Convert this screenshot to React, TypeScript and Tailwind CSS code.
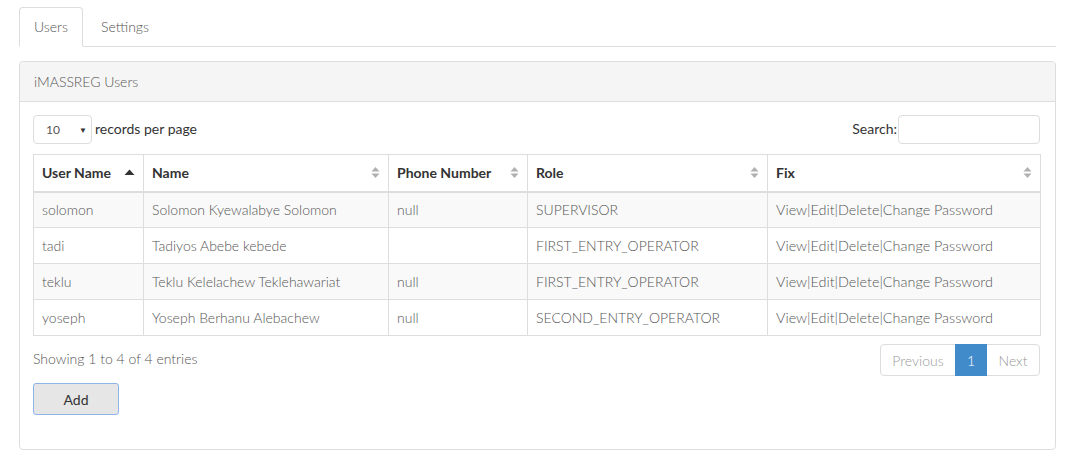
import React from "react";

const rows = [
  ["solomon", "Solomon Kyewalabye Solomon", "null", "SUPERVISOR"],
  ["tadi", "Tadiyos Abebe kebede", "", "FIRST_ENTRY_OPERATOR"],
  ["teklu", "Teklu Kelelachew Teklehawariat", "null", "FIRST_ENTRY_OPERATOR"],
  ["yoseph", "Yoseph Berhanu Alebachew", "null", "SECOND_ENTRY_OPERATOR"],
];

function SortBoth() {
  return (
    <svg width="9" height="13" viewBox="0 0 9 13" className="shrink-0">
      <path d="M0.5 5.5 L4.5 1 L8.5 5.5 Z" fill="#b0b0b0" />
      <path d="M0.5 7.5 L4.5 12 L8.5 7.5 Z" fill="#b0b0b0" />
    </svg>
  );
}

function SortUp() {
  return (
    <svg width="11" height="7" viewBox="0 0 11 7" className="shrink-0">
      <path d="M0.5 6 L5.5 0.5 L10.5 6 Z" fill="#333" />
    </svg>
  );
}

const cols = [
  { label: "User Name", w: "w-[110px]", sort: "up" },
  { label: "Name", w: "w-[245px]", sort: "both" },
  { label: "Phone Number", w: "w-[139px]", sort: "both" },
  { label: "Role", w: "w-[240px]", sort: "both" },
  { label: "Fix", w: "w-[273px]", sort: "both" },
];

export default function App() {
  return (
    <div className="w-[1079px] h-[462px] bg-white text-[14px] text-[#333] font-['Lato','Liberation_Sans',sans-serif] pl-[19px] pr-[23px] pt-[7px]">
      {/* Tabs */}
      <div className="flex border-b border-[#ddd] h-[40px]">
        <div className="w-[64px] h-[40px] border border-[#ddd] border-b-white rounded-t-[4px] flex items-center justify-center pb-[1px] font-light text-[#555] bg-white -mb-px">
          Users
        </div>
        <div className="pl-[18px] pr-[16px] h-[39px] flex items-center pb-[1px] font-light text-[#555]">Settings</div>
      </div>

      {/* Panel */}
      <div className="mt-[14px] border border-[#ddd] rounded-[4px] h-[389px]">
        <div className="h-[40px] bg-[#f5f5f5] border-b border-[#ddd] rounded-t-[4px] flex items-center pb-[1px] px-[14px] font-light text-[#555]">
          iMASSREG Users
        </div>
        <div className="px-[13px] pt-[13px]">
          <div className="flex items-start justify-between h-[39px] w-[1007px]">
            <div className="flex items-center">
              <div className="w-[59px] h-[29px] border border-[#ddd] rounded-[4px] flex items-center justify-between pl-[12px] pr-[4px] text-[12px] text-[#555]">
                <span>10</span>
                <span className="text-[8px] text-[#333]">▼</span>
              </div>
              <span className="ml-[3px] -mt-[2px]">records per page</span>
            </div>
            <div className="flex items-center">
              <span className="-mt-[2px]">Search:</span>
              <div className="w-[142px] h-[29px] border border-[#ddd] rounded-[4px] ml-[1px]" />
            </div>
          </div>

          <table className="w-[1007px] border-collapse table-fixed border border-[#ddd]">
            <thead>
              <tr className="h-[37px] border-b-2 border-[#ddd]">
                {cols.map((c) => (
                  <th key={c.label} className={`${c.w} border-r border-[#ddd] px-[8px] text-left font-bold text-[14px] text-[#333]`}>
                    <div className="flex items-center justify-between">
                      <span>{c.label}</span>
                      {c.sort === "up" ? <SortUp /> : <SortBoth />}
                    </div>
                  </th>
                ))}
              </tr>
            </thead>
            <tbody>
              {rows.map((r, i) => (
                <tr key={r[0]} className={`h-[36px] border-t border-[#ddd] ${i % 2 === 0 ? "bg-[#f9f9f9]" : "bg-white"}`}>
                  {r.map((v, j) => (
                    <td key={j} className="border-r border-[#ddd] px-[8px] font-light text-[#555] whitespace-nowrap">
                      {v}
                    </td>
                  ))}
                  <td className="px-[8px] font-light text-[#555] text-[14.4px] whitespace-nowrap">
                    View|Edit|Delete|Change Password
                  </td>
                </tr>
              ))}
            </tbody>
          </table>

          <div className="flex items-start justify-between mt-[8px] w-[1007px]">
            <div className="pt-[4px] font-light text-[#555]">Showing 1 to 4 of 4 entries</div>
            <div className="flex h-[32px] border border-[#ddd] rounded-[4px] font-light text-[#999]">
              <div className="w-[74px] flex items-center justify-center">Previous</div>
              <div className="w-[32px] flex items-center justify-center bg-[#428bca] text-white -my-px">1</div>
              <div className="w-[52px] flex items-center justify-center">Next</div>
            </div>
          </div>

          <button className="mt-[7px] w-[86px] h-[32px] bg-[#e6e6e6] border border-[#8fb4e8] rounded-[3px] text-[#333] text-[14px] font-normal flex items-center justify-center">
            Add
          </button>
        </div>
      </div>
    </div>
  );
}
